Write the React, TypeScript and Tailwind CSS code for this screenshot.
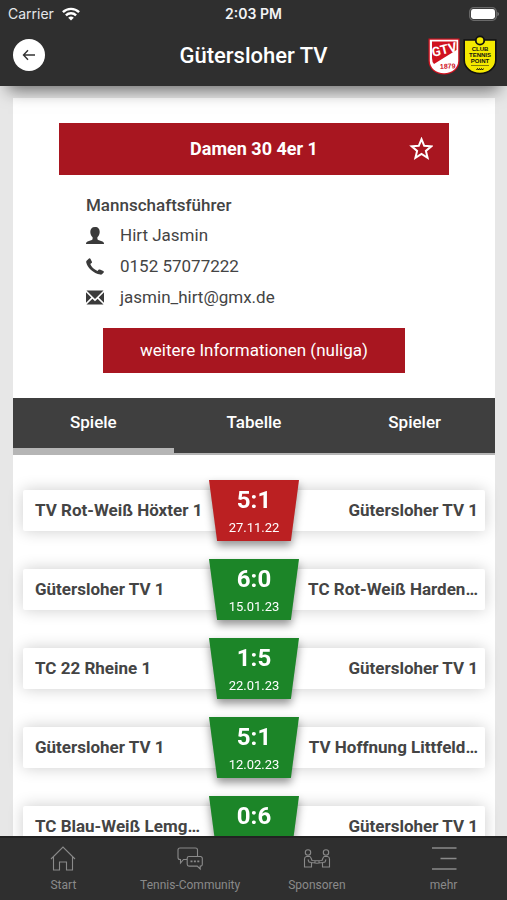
import { useState } from 'react';
import clsx from 'clsx';

interface Match {
  home: string;
  guest: string;
  score: string;
  date?: string;
  won: boolean;
}

const MATCHES: Match[] = [
  { home: 'TV Rot-Weiß Höxter 1', guest: 'Gütersloher TV 1', score: '5:1', date: '27.11.22', won: false },
  { home: 'Gütersloher TV 1', guest: 'TC Rot-Weiß Harden…', score: '6:0', date: '15.01.23', won: true },
  { home: 'TC 22 Rheine 1', guest: 'Gütersloher TV 1', score: '1:5', date: '22.01.23', won: true },
  { home: 'Gütersloher TV 1', guest: 'TV Hoffnung Littfeld…', score: '5:1', date: '12.02.23', won: true },
  { home: 'TC Blau-Weiß Lemg…', guest: 'Gütersloher TV 1', score: '0:6', won: true },
];

const TABS = ['Spiele', 'Tabelle', 'Spieler'];

function StatusBar() {
  return (
    <div className="grid h-7 grid-cols-3 items-center px-2 font-['Inter',sans-serif] text-sm">
      <div className="flex items-center gap-2 text-gray-200">
        Carrier
        <svg viewBox="0 0 18 14" className="h-[14px] w-[18px]" fill="none" stroke="white" strokeWidth="2.4">
          <path d="M0.9 5.2a11.6 11.6 0 0 1 16.2 0" />
          <path d="M3.9 8.4a7.3 7.3 0 0 1 10.2 0" />
          <path d="M9 13.6 6.2 10.8a4 4 0 0 1 5.6 0z" fill="white" stroke="none" />
        </svg>
      </div>
      <div className="text-center font-semibold text-gray-100">2:03 PM</div>
      <svg viewBox="0 0 30 14" className="h-[14px] w-[30px] justify-self-end">
        <rect x="0.7" y="0.7" width="26.6" height="12.6" rx="4" fill="none" stroke="#6a6a6a" strokeWidth="1.3" />
        <rect x="2" y="2" width="24" height="10" rx="2.4" fill="white" />
        <path d="M28.4 4.8v4.4q1.6-.8 1.6-2.2t-1.6-2.2z" fill="#7a7a7a" />
      </svg>
    </div>
  );
}

function ClubLogo() {
  return (
    <svg viewBox="0 0 32 38" className="h-[38px] w-8">
      <path d="M0.5 1.5h31V24c0 8-7 13.5-15.5 13.5S0.5 32 0.5 24z" fill="#d0121f" />
      <path d="M1.8 2.8h28.4V24c0 7-6.2 12.2-14.2 12.2S1.8 31 1.8 24z" fill="white" />
      <path d="M4 4.5h24.500V13L6 27Q4 25 4 21z" fill="#d0121f" />
      <text x="5" y="20" transform="rotate(-14 5 20)" fill="white" fontFamily="Roboto" fontWeight="700" fontSize="13">GTV</text>
      <text x="12" y="32" transform="rotate(-3 12 32)" fill="#d0121f" fontFamily="Liberation Sans" fontWeight="700" fontSize="7">1879</text>
    </svg>
  );
}

function SponsorLogo() {
  return (
    <svg viewBox="0 0 34 40" className="h-10 w-[34px]">
      <path d="M1.2 5h31.6v20c0 7.5-7 13.5-15.8 13.5S1.2 32.5 1.2 25z" fill="#f4e900" stroke="#111" strokeWidth="1.6" />
      <circle cx="17" cy="5.5" r="4.2" fill="#f4e900" stroke="#111" strokeWidth="1.8" />
      <g fill="#111" fontFamily="Liberation Sans" fontWeight="700" fontSize="6" textAnchor="middle">
        <text x="17" y="16">CLUB</text>
        <text x="17" y="22">TENNIS</text>
        <text x="17" y="28">POINT</text>
      </g>
      <path d="M8 30.5h18" stroke="#111" strokeWidth="0.5" />
      <path d="M13.5 35l1-1.500 1 1.500 1-1.500 1 1.500 1-1.500 1 1.500 1-1.500" stroke="#111" strokeWidth="1" fill="none" />
    </svg>
  );
}

function Header() {
  return (
    <header className="relative z-10 h-[86px] shrink-0 bg-[#2f2f2f] text-white shadow-[0_12px_16px_-8px_rgba(0,0,0,0.55)]">
      <StatusBar />
      <div className="grid h-[54px] grid-cols-[80px_1fr_80px] items-center px-2">
        <button type="button" aria-label="Zurück" className="ml-[5px] flex size-8 items-center justify-center rounded-full bg-white">
          <svg viewBox="0 0 14 12" className="h-3 w-[14px]" fill="none" stroke="#333" strokeWidth="1.4">
            <path d="M13 6H2M6 1.3 1.5 6 6 10.7" />
          </svg>
        </button>
        <h1 className="text-center text-[22px] font-medium">Gütersloher TV</h1>
        <div className="flex items-end justify-end gap-[3px] pr-[2px]">
          <ClubLogo />
          <SponsorLogo />
        </div>
      </div>
    </header>
  );
}

function TeamInfo() {
  const [favorite, setFavorite] = useState(false);

  return (
    <section className="flex flex-col px-[46px] pt-[25px] pb-[25px]">
      <div className="flex h-[52px] items-center bg-[#a81620] px-4 text-white">
        <h2 className="flex-1 pl-6 text-center text-lg font-bold">Damen 30 4er 1</h2>
        <button type="button" aria-label="Favorit" aria-pressed={favorite} onClick={() => setFavorite(!favorite)}>
          <svg viewBox="0 0 24 24" className="size-6" fill={favorite ? 'white' : 'none'} stroke="white" strokeWidth="2">
            <path d="M12.5 2.2l2.7 6.6 7.1.5-5.4 4.6 1.7 6.9-6.1-3.8-6.1 3.8 1.7-6.9L2.7 9.3l7.1-.5z" />
          </svg>
        </button>
      </div>

      <div className="mt-[15px] px-[27px] text-[17px] text-[#444]">
        <h3 className="leading-[30px] font-medium">Mannschaftsführer</h3>
        <ul className="leading-[31px]">
          <li className="flex items-center gap-4">
            <svg viewBox="0 0 18 18" className="size-[18px]" fill="#3a3a3a">
              <path d="M9 0c3.300 0 4.700 2 4.700 5 0 2.200-1 4.200-2.300 5.300v1.600c0 .5.300.8.800 1l4.300 1.600c1 .4 1.500 1.200 1.500 2.500H0c0-1.300.5-2.100 1.500-2.500l4.300-1.600c.5-.2.800-.5.800-1v-1.600C5.300 9.200 4.300 7.200 4.300 5 4.300 2 5.700 0 9 0z" />
            </svg>
            Hirt Jasmin
          </li>
          <li className="flex items-center gap-4">
            <svg viewBox="0 0 18 18" className="size-[18px]" fill="#3a3a3a">
              <path d="M.6 2.700 3 .5q.8-.6 1.400.2l1.500 3q.4.900-.4 1.400L4.300 6q1.600 4.400 7.200 7l1-1.200q.6-.6 1.400-.2l3.400 1.500q.8.500.4 1.300l-1.500 1.700q-.7.700-1.800.5C7.400 15.200 1.200 9.700.2 4.200q-.1-.9.400-1.500z" />
            </svg>
            <a href="tel:015257077222">0152 57077222</a>
          </li>
          <li className="flex items-center gap-4">
            <svg viewBox="0 0 18 18" className="size-[18px]" fill="#3a3a3a">
              <path d="M0.5 1.5h17L9 10zM0 3.2 5.3 8.6 0 13.8zM18 3.2v10.6l-5.3-5.2zM6.4 9.700 9 12.3l2.6-2.6 5.9 5.900H.5z" />
            </svg>
            <a href="mailto:jasmin_hirt@gmx.de">jasmin_hirt@gmx.de</a>
          </li>
        </ul>
      </div>

      <a href="#nuliga" className="mx-11 mt-[15px] flex h-[45px] items-center justify-center bg-[#a81620] text-[17px] text-white">
        weitere Informationen (nuliga)
      </a>
    </section>
  );
}

function MatchRow({ match }: { match: Match }) {
  return (
    <li className="grid h-[41px] grid-cols-[1fr_90px_1fr] items-center rounded-xs bg-white text-[17px] font-bold text-[#444] shadow-[0_0_16px_rgba(0,0,0,0.2)]">
      <span className="pl-3 whitespace-nowrap">{match.home}</span>
      <div className="-my-[10px] drop-shadow-[0_5px_4px_rgba(0,0,0,0.4)]">
        <div
          className={clsx(
            'flex h-[61px] flex-col items-center pt-1 text-white [clip-path:polygon(0_0,100%_0,91%_100%,9%_100%)]',
            match.won ? 'bg-[#1c8528]' : 'bg-[#bb2022]'
          )}>
          <strong className="text-2xl leading-8 font-bold">{match.score}</strong>
          <span className="text-[13px] leading-6 font-normal">{match.date}</span>
        </div>
      </div>
      <span className="pr-[7px] text-right whitespace-nowrap">{match.guest}</span>
    </li>
  );
}

function BottomNav() {
  return (
    <nav className="relative z-10 grid h-16 shrink-0 grid-cols-4 border-t-2 border-[#222] bg-[#2f2f2f] pt-[6px] text-[12px] text-[#8a8a8a]">
      <a href="#start" className="flex flex-col items-center gap-1">
        <svg viewBox="0 0 28 28" className="size-7" fill="none" stroke="currentColor" strokeWidth="1.1">
          <path d="M2 15 14 3l12 12M4.500 13v13h6v-8h7v8h6V13" />
        </svg>
        Start
      </a>
      <a href="#community" className="flex flex-col items-center gap-1">
        <svg viewBox="0 0 28 28" className="size-7" fill="none" stroke="currentColor" strokeWidth="1.1">
          <path d="M11 15.500H7.500L4.500 19v-3.500H4a2 2 0 0 1-2-2V6a2 2 0 0 1 2-2h15.500a2 2 0 0 1 2 2v6" />
          <path d="M13 12.500h11.500a1.800 1.800 0 0 1 1.800 1.800v6a1.800 1.800 0 0 1-1.800 1.800h-.3V25l-3-2.900H13a1.800 1.800 0 0 1-1.800-1.800v-6a1.800 1.800 0 0 1 1.800-1.800z" />
          <path d="M14.500 17.300h2M17.900 17.300h2M21.300 17.300h2" strokeWidth="1.8" />
        </svg>
        Tennis-Community
      </a>
      <a href="#sponsoren" className="flex flex-col items-center gap-1">
        <svg viewBox="0 0 28 28" className="size-7" fill="none" stroke="currentColor" strokeWidth="1.1">
          <circle cx="5" cy="8.5" r="2.7" />
          <circle cx="23" cy="8.5" r="2.7" />
          <path d="M3.500 12.500h3q1 0 1.500 1.500l1 2.500 5 .3 5-.3 1-2.500q.5-1.500 1.500-1.500h3q2 .3 2 2.500v8h-7v-4.500l-5.500.7-5.500-.7V23h-7v-8q0-2.200 2-2.500zM5 15.500l1 2.500 2.500.5M23 15.500 22 18l-2.500.5M12 16.800v2M16 16.800v2" />
        </svg>
        Sponsoren
      </a>
      <a href="#mehr" className="flex flex-col items-center gap-1">
        <svg viewBox="0 0 28 28" className="size-7" fill="none" stroke="currentColor" strokeWidth="1.3">
          <path d="M2 4h24.500M10.500 14.500h16M2 25h24.500" />
        </svg>
        mehr
      </a>
    </nav>
  );
}

export default function App() {
  const [tab, setTab] = useState('Spiele');

  return (
    <div className="flex h-screen flex-col bg-[#e7e7e7] font-['Roboto',sans-serif]">
      <Header />
      <main className="min-h-0 flex-1 overflow-y-auto pt-3 pr-3 pl-[13px] [scrollbar-width:none]">
        <div className="min-h-full bg-white">
          <TeamInfo />
          <div role="tablist" className="grid grid-cols-3 border-b-2 border-[#b5b5b5] bg-[#3f3f3f]">
            {TABS.map(t => (
              <button
                key={t}
                type="button"
                role="tab"
                aria-selected={t === tab}
                onClick={() => setTab(t)}
                className={clsx(
                  'h-[55px] border-b-[5px] text-[17px] font-medium text-white',
                  t === tab ? 'border-[#b5b5b5]' : 'border-transparent'
                )}>
                {t}
              </button>
            ))}
          </div>
          <ul className="flex flex-col gap-[38px] px-[10px] pt-[35px] pb-8">
            {MATCHES.map((m, i) => (
              <MatchRow key={i} match={m} />
            ))}
          </ul>
        </div>
      </main>
      <BottomNav />
    </div>
  );
}
